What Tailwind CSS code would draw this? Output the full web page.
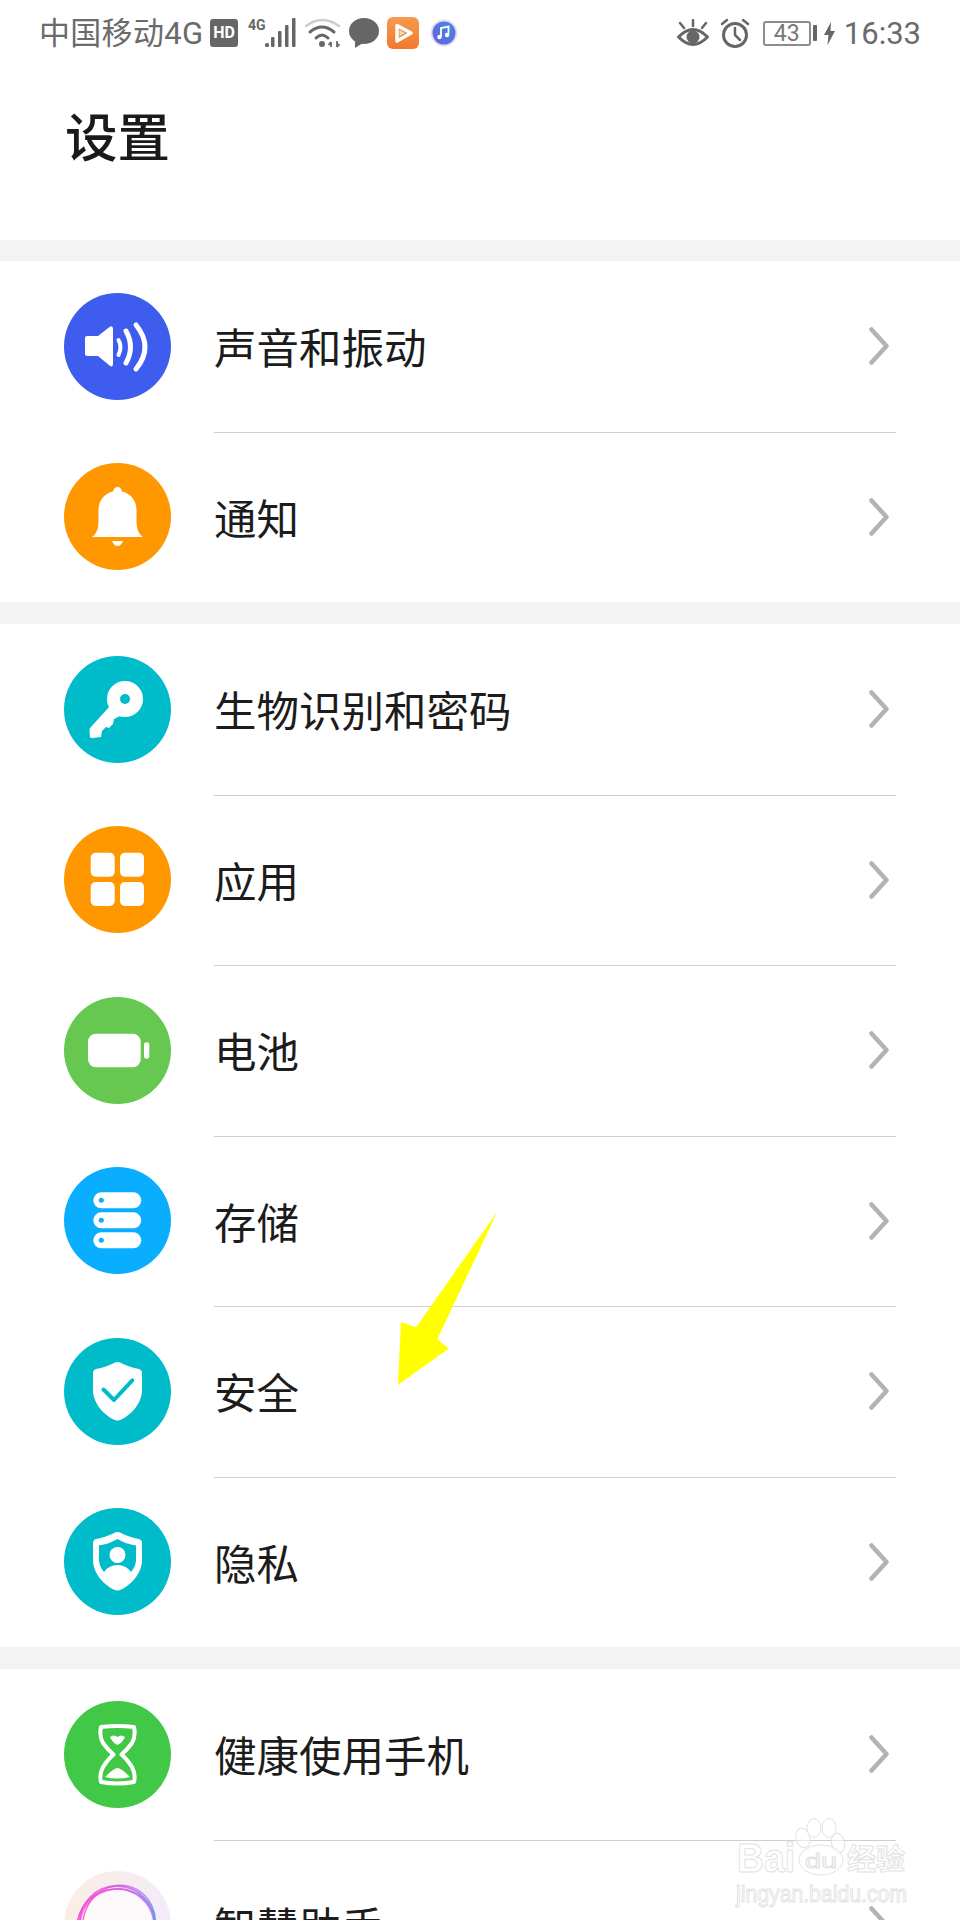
<!DOCTYPE html>
<html lang="zh">
<head>
<meta charset="utf-8">
<script src="https://cdn.jsdelivr.net/npm/@tailwindcss/browser@4"></script>
</head>
<body class="bg-[#f3f3f3]">
<div class="relative w-[960px] h-[1920px] overflow-hidden bg-[#f3f3f3] text-[#1c1c1c] font-['Noto_Sans_CJK_SC','Noto_Sans',sans-serif]">

  <!-- header -->
  <header class="h-[240px] bg-white">
    <div class="h-[66px] pl-[39px] pr-[39px] flex items-center justify-between text-[#6b6b6b]">
      <div class="flex items-center">
        <span class="text-[31px] leading-none font-['Roboto','Noto_Sans_CJK_SC',sans-serif] w-[171px] tracking-[0.3px]">中国移动4G</span>
        <span class="w-[28px] h-[28px] rounded-[3px] bg-[#666] text-white text-[16px] leading-[28px] font-bold text-center font-['Roboto',sans-serif]">HD</span>
        <svg class="ml-[10px]" width="48" height="32" viewBox="0 0 48 32"><text x="0" y="13" font-family="Roboto" font-weight="700" font-size="14" fill="#666">4G</text><g fill="#666"><rect x="17" y="26" width="4" height="4" rx="1.5"/><rect x="23" y="20" width="3.5" height="10" rx="1"/><rect x="30" y="14" width="3.5" height="16" rx="1"/><rect x="37" y="8" width="3.5" height="22" rx="1"/><rect x="44" y="1" width="3.5" height="29" rx="1"/></g></svg>
        <svg class="ml-[9px]" width="36" height="32" viewBox="0 0 36 32" fill="none"><path d="M1 9Q17 -3 34 9" stroke="#ccc" stroke-width="2.5" stroke-linecap="round"/><path d="M5 15Q17 5 29 15" stroke="#666" stroke-width="3" stroke-linecap="round"/><path d="M11 21Q17 15 23 21" stroke="#666" stroke-width="3" stroke-linecap="round"/><circle cx="17" cy="27" r="3" fill="#666"/><path d="M26 30V25M26 25L23.5 28M32 24V30M32 30L34.5 27" stroke="#666" stroke-width="1.8"/></svg>
        <svg class="ml-[7px]" width="32" height="32" viewBox="0 0 32 32"><ellipse cx="16" cy="14" rx="15" ry="13" fill="#666"/><path d="M7 22L7 31L15 26Z" fill="#666"/></svg>
        <svg class="ml-[7px]" width="32" height="32" viewBox="0 0 32 32"><defs><linearGradient id="o" x1="0" y1="0" x2="0" y2="1"><stop offset="0" stop-color="#f79a50"/><stop offset="1" stop-color="#f3792e"/></linearGradient></defs><rect width="32" height="32" rx="6" fill="url(#o)"/><path d="M10 8.500L24 16L10 24Z" fill="none" stroke="#fff" stroke-width="3.500" stroke-linejoin="round"/><path d="M12.500 13L18 16L12.500 19Z" fill="#fbd9bd"/></svg>
        <svg class="ml-[11px]" width="28" height="28" viewBox="0 0 28 28"><defs><linearGradient id="m" x1="0" y1="1" x2="1" y2="0"><stop offset="0" stop-color="#6a5fe0"/><stop offset="1" stop-color="#3f8ce0"/></linearGradient></defs><circle cx="14" cy="14" r="13.5" fill="#e9ddf6"/><circle cx="14" cy="14" r="11.5" fill="url(#m)"/><path d="M11 18V9L18.5 7.500V16" fill="none" stroke="#fff" stroke-width="1.8"/><circle cx="9.500" cy="18" r="2.200" fill="#fff"/><circle cx="17" cy="16" r="2.200" fill="#fff"/></svg>
      </div>
      <div class="flex items-center">
        <svg width="32" height="30" viewBox="0 0 32 30" class="mt-[1px]"><g stroke="#666" stroke-width="2.500" stroke-linecap="round" fill="none"><path d="M16 1V7M3 4L7 9M29 4L25 9"/><path d="M1.500 18Q16 3 30.500 18Q16 33 1.500 18Z" stroke-width="3"/></g><circle cx="16" cy="18" r="6.500" fill="#666"/></svg>
        <svg class="ml-[11px]" width="30" height="30" viewBox="0 0 30 30" fill="none"><circle cx="15" cy="17" r="11.500" stroke="#666" stroke-width="3"/><path d="M15 10V17L20 22" stroke="#666" stroke-width="2.500" stroke-linecap="round"/><path d="M2 6L7 2M28 6L23 2" stroke="#666" stroke-width="2.500" stroke-linecap="round"/></svg>
        <span class="ml-[13px] w-[48px] h-[25px] rounded-[3px] border-2 border-[#8c8c8c] text-[23px] leading-[21px] text-center text-[#777] font-['Roboto',sans-serif]">43</span>
        <span class="ml-[2px] w-[4px] h-[16px] rounded-[1px] bg-[#666]"></span>
        <svg class="ml-[7px]" width="11" height="23" viewBox="0 0 11 23"><path d="M7 0L0 13H4.500L3.500 23L11 9H6.500Z" fill="#666"/></svg>
        <span class="ml-[9px] text-[31px] leading-none font-['Roboto',sans-serif]">16:33</span>
      </div>
    </div>
    <h1 class="pl-[65px] mt-[38px] h-[60px] text-[52.500px] leading-[60px] font-medium text-[#1a1a1a]">设置</h1>
  </header>

  <!-- section 1 -->
  <section class="mt-[21px] bg-white">
    <div class="h-[170.500px] pl-[64px] flex items-center">
      <svg width="107" height="107" viewBox="0 0 107 107" class="shrink-0"><circle cx="53.500" cy="53.500" r="53.500" fill="#3e5ced"/><path d="M21 45Q21 43 23 43H34L45.500 34Q49 32 49 36V71Q49 75 45.500 72.500L34 63H23Q21 63 21 61Z" fill="#fff"/><g fill="none" stroke="#fff" stroke-linecap="round"><path d="M54.500 47Q58.500 54 54.500 62" stroke-width="4"/><path d="M62 38Q71 54 62 70" stroke-width="5"/><path d="M72 32Q90 54 72 76" stroke-width="5"/></g></svg>
      <div class="ml-[43px] mr-[64px] flex-1 self-start h-[171.500px] flex items-center justify-between pr-[7px] border-b border-[#cfcfcf]">
        <span class="text-[42.500px] leading-none">声音和振动</span>
        <svg width="20" height="38" viewBox="0 0 20 38" fill="none"><path d="M2.500 2.500L17.500 19L2.500 35.500" stroke="#b3b3b3" stroke-width="4.500" stroke-linecap="round" stroke-linejoin="round"/></svg>
      </div>
    </div>
    <div class="h-[170.500px] pl-[64px] flex items-center">
      <svg width="107" height="107" viewBox="0 0 107 107" class="shrink-0"><circle cx="53.500" cy="53.500" r="53.500" fill="#ff9800"/><path d="M28 74Q34 70 34.500 60V46C35 36 42 30 49 28.500Q50 24 53.500 24Q57 24 58 28.500C65 30 72 36 72.500 46V60Q73 70 79 74Z" fill="#fff"/><path d="M48 78H59Q57 83 53.500 83Q50 83 48 78Z" fill="#fff"/></svg>
      <div class="ml-[43px] mr-[64px] flex-1 h-full flex items-center justify-between pr-[7px]">
        <span class="text-[42.500px] leading-none">通知</span>
        <svg width="20" height="38" viewBox="0 0 20 38" fill="none"><path d="M2.500 2.500L17.500 19L2.500 35.500" stroke="#b3b3b3" stroke-width="4.500" stroke-linecap="round" stroke-linejoin="round"/></svg>
      </div>
    </div>
  </section>

  <!-- section 2 -->
  <section class="mt-[22px] bg-white">
    <div class="h-[170.500px] pl-[64px] flex items-center">
      <svg width="107" height="107" viewBox="0 0 107 107" class="shrink-0"><circle cx="53.500" cy="53.500" r="53.500" fill="#00bcca"/><path d="M46 50L26 72Q25 73.500 25.500 75L26 81Q26 82 28 82L37 81L38 75L42 71L45 72L49 68L50 63L56 60Z" fill="#fff"/><circle cx="61" cy="43" r="18" fill="#fff"/><circle cx="61" cy="43" r="5" fill="#00bcca"/></svg>
      <div class="ml-[43px] mr-[64px] flex-1 self-start h-[171.500px] flex items-center justify-between pr-[7px] border-b border-[#cfcfcf]">
        <span class="text-[42.500px] leading-none">生物识别和密码</span>
        <svg width="20" height="38" viewBox="0 0 20 38" fill="none"><path d="M2.500 2.500L17.500 19L2.500 35.500" stroke="#b3b3b3" stroke-width="4.500" stroke-linecap="round" stroke-linejoin="round"/></svg>
      </div>
    </div>
    <div class="h-[170.500px] pl-[64px] flex items-center">
      <svg width="107" height="107" viewBox="0 0 107 107" class="shrink-0"><circle cx="53.500" cy="53.500" r="53.500" fill="#ff9800"/><g fill="#fff"><rect x="26.700" y="26.700" width="24" height="24" rx="5"/><rect x="56" y="26.700" width="24" height="24" rx="5"/><rect x="26.700" y="56" width="24" height="24" rx="5"/><rect x="56" y="56" width="24" height="24" rx="5"/></g></svg>
      <div class="ml-[43px] mr-[64px] flex-1 self-start h-[171.500px] flex items-center justify-between pr-[7px] border-b border-[#cfcfcf]">
        <span class="text-[42.500px] leading-none">应用</span>
        <svg width="20" height="38" viewBox="0 0 20 38" fill="none"><path d="M2.500 2.500L17.500 19L2.500 35.500" stroke="#b3b3b3" stroke-width="4.500" stroke-linecap="round" stroke-linejoin="round"/></svg>
      </div>
    </div>
    <div class="h-[170.500px] pl-[64px] flex items-center">
      <svg width="107" height="107" viewBox="0 0 107 107" class="shrink-0"><circle cx="53.500" cy="53.500" r="53.500" fill="#66c850"/><rect x="24" y="36.700" width="52.700" height="33.600" rx="8" fill="#fff"/><rect x="80" y="45.300" width="5.300" height="16.400" rx="2.600" fill="#fff"/></svg>
      <div class="ml-[43px] mr-[64px] flex-1 self-start h-[171.500px] flex items-center justify-between pr-[7px] border-b border-[#cfcfcf]">
        <span class="text-[42.500px] leading-none">电池</span>
        <svg width="20" height="38" viewBox="0 0 20 38" fill="none"><path d="M2.500 2.500L17.500 19L2.500 35.500" stroke="#b3b3b3" stroke-width="4.500" stroke-linecap="round" stroke-linejoin="round"/></svg>
      </div>
    </div>
    <div class="h-[170.500px] pl-[64px] flex items-center">
      <svg width="107" height="107" viewBox="0 0 107 107" class="shrink-0"><circle cx="53.500" cy="53.500" r="53.500" fill="#0aaeff"/><g fill="#fff"><rect x="29.300" y="25.300" width="48" height="16" rx="8"/><rect x="29.300" y="45.300" width="48" height="16" rx="8"/><rect x="29.300" y="65.300" width="48" height="16" rx="8"/></g><g fill="#0aaeff"><circle cx="37.300" cy="33.300" r="2.500"/><circle cx="37.300" cy="53.300" r="2.500"/><circle cx="37.300" cy="73.300" r="2.500"/></g></svg>
      <div class="ml-[43px] mr-[64px] flex-1 self-start h-[171.500px] flex items-center justify-between pr-[7px] border-b border-[#cfcfcf]">
        <span class="text-[42.500px] leading-none">存储</span>
        <svg width="20" height="38" viewBox="0 0 20 38" fill="none"><path d="M2.500 2.500L17.500 19L2.500 35.500" stroke="#b3b3b3" stroke-width="4.500" stroke-linecap="round" stroke-linejoin="round"/></svg>
      </div>
    </div>
    <div class="h-[170.500px] pl-[64px] flex items-center">
      <svg width="107" height="107" viewBox="0 0 107 107" class="shrink-0"><circle cx="53.500" cy="53.500" r="53.500" fill="#00bcca"/><path d="M53.500 24Q56 24 59 26Q68 30 75 31Q78 32 78 35V52C78 66 66 78 56 82Q53.500 83 51 82C41 78 29 66 29 52V35Q29 32 32 31Q39 30 48 26Q51 24 53.500 24Z" fill="#fff"/><path d="M39.500 51.500L50 62L68.300 42.300" fill="none" stroke="#00bcca" stroke-width="4" stroke-linecap="round" stroke-linejoin="round"/></svg>
      <div class="ml-[43px] mr-[64px] flex-1 self-start h-[171.500px] flex items-center justify-between pr-[7px] border-b border-[#cfcfcf]">
        <span class="text-[42.500px] leading-none">安全</span>
        <svg width="20" height="38" viewBox="0 0 20 38" fill="none"><path d="M2.500 2.500L17.500 19L2.500 35.500" stroke="#b3b3b3" stroke-width="4.500" stroke-linecap="round" stroke-linejoin="round"/></svg>
      </div>
    </div>
    <div class="h-[170.500px] pl-[64px] flex items-center">
      <svg width="107" height="107" viewBox="0 0 107 107" class="shrink-0"><circle cx="53.500" cy="53.500" r="53.500" fill="#00bcca"/><path d="M53.500 24Q56 24 59 26Q68 30 75 31Q78 32 78 35V52C78 66 66 78 56 82Q53.500 83 51 82C41 78 29 66 29 52V35Q29 32 32 31Q39 30 48 26Q51 24 53.500 24Z" fill="#fff"/><path d="M53.500 31Q62 36 72 37.500V52Q72 58 67 64Q62 57 53.500 57Q45 57 40 64Q35 58 35 52V37.500Q45 36 53.500 31Z" fill="#00bcca"/><circle cx="53.500" cy="47" r="8" fill="#fff"/></svg>
      <div class="ml-[43px] mr-[64px] flex-1 h-full flex items-center justify-between pr-[7px]">
        <span class="text-[42.500px] leading-none">隐私</span>
        <svg width="20" height="38" viewBox="0 0 20 38" fill="none"><path d="M2.500 2.500L17.500 19L2.500 35.500" stroke="#b3b3b3" stroke-width="4.500" stroke-linecap="round" stroke-linejoin="round"/></svg>
      </div>
    </div>
  </section>

  <!-- section 3 -->
  <section class="mt-[22px] bg-white">
    <div class="h-[170.500px] pl-[64px] flex items-center">
      <svg width="107" height="107" viewBox="0 0 107 107" class="shrink-0"><circle cx="53.500" cy="53.500" r="53.500" fill="#41c846"/><path d="M37 26Q53 24 70 26Q72 35 68 42Q63 49 57.500 53.500Q63 58 68 66Q72 74 70 81Q53 84 37 81Q35 74 39 66Q44 58 49.500 53.500Q44 49 39 42Q35 35 37 26Z" fill="none" stroke="#fff" stroke-width="4" stroke-linejoin="round"/><path d="M46 36Q50 33 53.500 36Q57 33 61 36Q59 41 53.500 44Q48 41 46 36Z" fill="#fff"/><path d="M41 76Q50 67 53.500 67Q57 67 66 76Q53 79 41 76Z" fill="#fff"/></svg>
      <div class="ml-[43px] mr-[64px] flex-1 self-start h-[171.500px] flex items-center justify-between pr-[7px] border-b border-[#cfcfcf]">
        <span class="text-[42.500px] leading-none">健康使用手机</span>
        <svg width="20" height="38" viewBox="0 0 20 38" fill="none"><path d="M2.500 2.500L17.500 19L2.500 35.500" stroke="#b3b3b3" stroke-width="4.500" stroke-linecap="round" stroke-linejoin="round"/></svg>
      </div>
    </div>
    <div class="h-[170.500px] pl-[64px] flex items-center">
      <svg width="107" height="107" viewBox="0 0 107 107" class="shrink-0"><defs><linearGradient id="bg" x1="0" y1="0" x2="1" y2="0"><stop offset="0" stop-color="#fbeee4"/><stop offset="1" stop-color="#f3ecfa"/></linearGradient><linearGradient id="ring" x1="0" y1="0" x2="1" y2="0.300"><stop offset="0" stop-color="#ff3ccb"/><stop offset="0.600" stop-color="#c860f2"/><stop offset="1" stop-color="#5a98f2"/></linearGradient></defs><circle cx="53.500" cy="53.500" r="53.500" fill="url(#bg)"/><circle cx="53.500" cy="54" r="36" fill="#fdf9fb"/><g fill="none" stroke="url(#ring)" stroke-opacity="0.800"><ellipse cx="53" cy="54" rx="38" ry="39" stroke-width="2"/><ellipse cx="55" cy="53" rx="36" ry="39" stroke-width="1.500" transform="rotate(18 55 53)"/><ellipse cx="52" cy="54" rx="39" ry="36" stroke-width="1.500" transform="rotate(-14 52 54)"/><ellipse cx="53" cy="55" rx="37" ry="37" stroke-width="1.500" transform="rotate(40 53 55)"/></g></svg>
      <div class="ml-[43px] mr-[64px] flex-1 h-full flex items-center justify-between pr-[7px]">
        <span class="text-[42.500px] leading-none">智慧助手</span>
        <svg width="20" height="38" viewBox="0 0 20 38" fill="none"><path d="M2.500 2.500L17.500 19L2.500 35.500" stroke="#b3b3b3" stroke-width="4.500" stroke-linecap="round" stroke-linejoin="round"/></svg>
      </div>
    </div>
  </section>

  <!-- yellow annotation arrow -->
  <svg class="absolute left-0 top-0 pointer-events-none" width="960" height="1920" viewBox="0 0 960 1920"><path d="M497.300 1211.700L416 1327.300L401 1322L398 1384.700L448.700 1348.700L437.300 1339.300Z" fill="#ffff00"/></svg>

  <!-- watermark -->
  <svg class="absolute left-[730px] top-[1810px] pointer-events-none" width="190" height="110" viewBox="0 0 190 110">
    <g fill="#fff" fill-opacity="0.500" stroke="#e2e2e2" stroke-width="1">
      <ellipse cx="73" cy="28" rx="7" ry="10" transform="rotate(-15 73 28)"/>
      <ellipse cx="84" cy="18" rx="7" ry="9.500"/>
      <ellipse cx="99" cy="18" rx="7" ry="9.500"/>
      <ellipse cx="108" cy="33" rx="6.500" ry="10" transform="rotate(-12 108 33)"/>
      <ellipse cx="91" cy="50" rx="22" ry="15"/>
      <text x="7" y="62" font-family="Liberation Sans" font-weight="700" font-size="40" textLength="58" lengthAdjust="spacingAndGlyphs">Bai</text>
      <text x="75" y="58" font-family="Liberation Sans" font-size="21" textLength="32" lengthAdjust="spacingAndGlyphs">du</text>
      <text x="117" y="60" font-family="Noto Sans CJK SC" font-weight="700" font-size="29" textLength="58" lengthAdjust="spacingAndGlyphs">经验</text>
      <text x="6" y="92" font-family="Liberation Sans" font-size="24" textLength="171" lengthAdjust="spacingAndGlyphs">jingyan.baidu.com</text>
    </g>
  </svg>
</div>
</body>
</html>
